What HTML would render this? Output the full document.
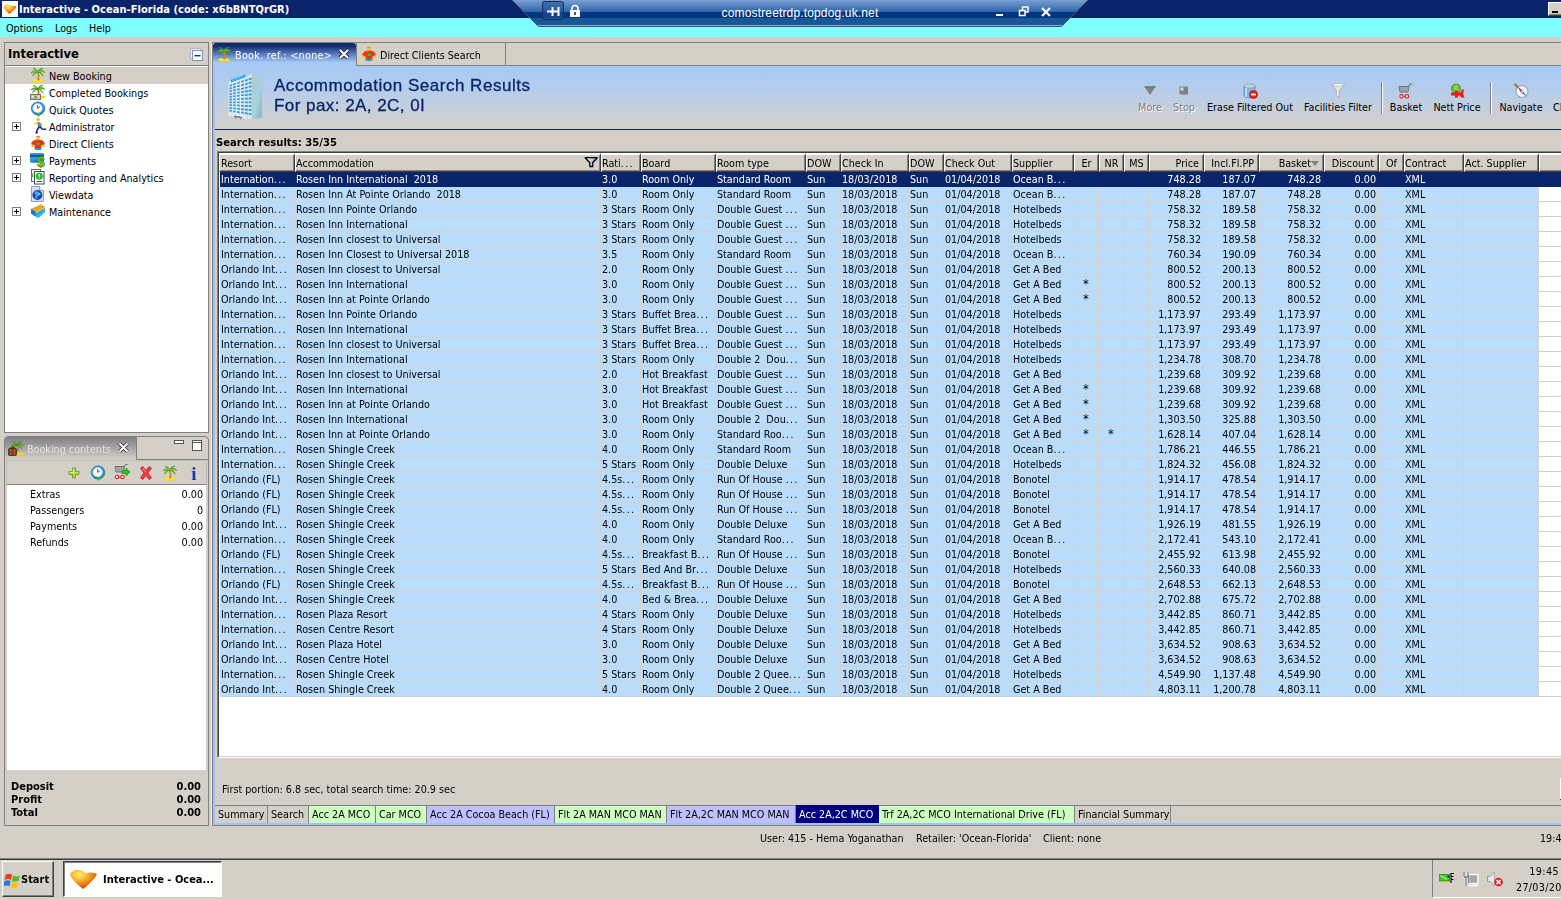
<!DOCTYPE html>
<html lang="en">
<head>
<meta charset="utf-8">
<title>Interactive - Ocean-Florida</title>
<style>
*{box-sizing:border-box}
html,body{margin:0;padding:0}
body{width:1561px;height:899px;overflow:hidden;position:relative;opacity:.999;background:#D4D0C8;font-family:"DejaVu Sans Condensed","Liberation Sans",sans-serif;font-size:10.7px;color:#000;line-height:13px}
.a{position:absolute;white-space:nowrap}
/* title bar */
#title{left:0;top:0;width:1561px;height:18px;background:#0A246A}
#title .t{left:19px;top:3px;letter-spacing:.05px;color:#fff;font-weight:bold;font-size:11px;line-height:14px}
#minb{left:1548px;top:2px;width:16px;height:14px;background:#D4D0C8;border-top:1px solid #fff;border-left:1px solid #fff;border-bottom:1px solid #404040;box-shadow:inset 0 -1px 0 #808080}
#minb i{position:absolute;left:3px;top:8px;width:6px;height:2px;background:#000}
#menu{left:0;top:18px;width:1561px;height:19px;background:#80FFFF}
#menu span{position:absolute;top:4px}
/* left top panel */
#lp{left:4px;top:42px;width:205px;height:391px;border:1px solid #808080;background:#D4D0C8}
#lp .hd{left:0;top:0;width:203px;height:23px;border-bottom:1px solid #808080}
#lp .hd .t{left:3px;top:3px;font-weight:bold;font-size:12.8px;line-height:16px}
#lp .tree{left:0;top:23px;width:203px;height:366px;background:#fff;border-top:1px solid #fff}
#lp .sel{left:0;top:0;width:203px;height:17px;background:#D4D0C8}
.ti{position:absolute;left:44px;height:17px;line-height:17px;padding-top:1px;white-space:nowrap}
.pm{position:absolute;left:7px;width:9px;height:9px;border:1px solid #808080;background:#fff}
.pm:before{content:"";position:absolute;left:1px;top:3px;width:5px;height:1px;background:#000}
.pm:after{content:"";position:absolute;left:3px;top:1px;width:1px;height:5px;background:#000}
.ic{position:absolute;width:16px;height:16px}
/* left bottom panel */
#bp{left:4px;top:436px;width:205px;height:390px;border:1px solid #808080;border-radius:4px 4px 0 0;background:#D4D0C8}
#bp .tab{left:0;top:0;width:131px;height:23px;border-radius:3px 0 0 0;background:linear-gradient(#7f7f80,#a5a3a3 45%,#d4d0c8)}
#bp .tab .t{left:22px;top:6px;color:#e6e3dd}
#bp .tabr{left:131px;top:0;width:72px;height:23px;border-left:1px solid #808080;border-bottom:1px solid #808080}
#bp .tb{left:1px;top:23px;width:201px;height:25px;border:1px solid #c0bdb6;border-bottom:1px solid #808080}
#bp .list{left:2px;top:48px;width:199px;height:285px;background:#fff}
#bp .list span{position:absolute}
#bp .tot{font-weight:bold;font-size:11px}
/* main */
#edge{left:211px;top:42px;width:2px;height:784px;background:#808080;border-left:1px solid #eceae6}
#mtabs{left:212px;top:42px;width:1349px;height:24px;border-top:1px solid #808080;border-bottom:1px solid #808080}
#tab1{left:213px;top:43px;width:143px;height:23px;border-radius:3px 3px 0 0;background:linear-gradient(#0A246A 0,#15307a 15%,#5d7fc0 50%,#a6caf7 85%,#a7c9f7)}
#tab1 .t{left:22px;top:6px;color:#fff;letter-spacing:.3px}
#tab2{left:356px;top:43px;width:150px;height:22px;border-right:1px solid #808080;border-left:1px solid #808080}
#tab2 .t{left:23px;top:6px}
#lb{left:213px;top:66px;width:2px;height:758px;background:#9cc3f8}
#bb{left:213px;top:823px;width:1348px;height:2px;background:#9cc3f8}
#bb2{left:212px;top:825px;width:1349px;height:1px;background:#808080}
#hdr{left:215px;top:66px;width:1346px;height:63px;background:linear-gradient(#a6caf4 0,#b4cdec 35%,#c4cfde 65%,#d4d0c8 100%)}
#hline{left:215px;top:129px;width:1346px;height:1px;background:#0A246A}
#hdr .h1{left:59px;top:10px;font-family:"Liberation Sans",sans-serif;font-size:17px;line-height:20px;color:#0A246A;letter-spacing:.52px;-webkit-text-stroke:.3px #0A246A}
#hdr .h2{left:59px;top:30px;font-family:"Liberation Sans",sans-serif;font-size:17px;line-height:20px;color:#0A246A;letter-spacing:.45px;-webkit-text-stroke:.3px #0A246A}
.tbi{position:absolute;top:35px;height:13px;white-space:nowrap;text-align:center}
.tsep{position:absolute;top:16px;width:2px;height:32px;border-left:1px solid #808080;border-right:1px solid #fff}
#sr{left:216px;top:136px;font-weight:bold;font-size:11.2px;line-height:14px}
/* grid */
#gridb{left:217px;top:151px;width:1344px;height:607px;border-top:1px solid #808080;border-left:1px solid #808080;border-bottom:1px solid #fff;background:#fff}
#gridb2{left:218px;top:152px;width:1343px;height:605px;border-top:1px solid #404040;border-left:1px solid #404040;border-bottom:1px solid #D4D0C8}
#grid{left:219px;top:153px;width:1342px;height:603px;overflow:hidden}
.hc{position:absolute;top:0;height:19px;background:#D4D0C8;border-top:2px solid #fff;border-left:1px solid #fff;border-right:1px solid #404040;border-bottom:1px solid #404040;box-shadow:inset -1px -1px 0 #808080;padding:2px 3px 0 0;line-height:13px;white-space:nowrap;overflow:hidden}
.hc:first-child{padding-left:1px}
.hc.ar{text-align:right;padding-right:4px}
.hc.ac{text-align:center;padding:2px 0 0 0}
.fil{position:absolute;right:2px;top:2px}
.sa{display:inline-block;width:0;height:0;border-left:4px solid transparent;border-right:4px solid transparent;border-top:5px solid #808080;margin-left:0;vertical-align:1px}
.r{position:absolute;left:1px;width:1341px;height:15px;background:linear-gradient(to right,#BADDFD 0,#BADDFD 1319px,#fff 1319px);border-bottom:1px solid #D5D1CB}
.r b{position:absolute;top:0;height:14px;font-weight:normal;line-height:16px;padding:0 3px 0 1px;white-space:nowrap;overflow:hidden;border-right:0;box-shadow:1px 0 0 #D5D1CB}
.r b.ar{text-align:right;padding-right:2px}
.r b.ac{text-align:center;padding:0}
.r b.st{font-size:13px;line-height:14px}
.r.sel{width:1341px;background:#0A246A;color:#fff;border-bottom-color:#0A246A}
.r.sel b{box-shadow:none}
s{text-decoration:none;letter-spacing:1.3px}
#fp{left:222px;top:783px}
/* bottom tabs */
.bt{position:absolute;top:805px;height:18px;border-top:1px solid #808080;border-right:1px solid #808080;padding:2px 0 0 3px;white-space:nowrap;overflow:hidden}
#status{left:760px;top:832px}
#clk{left:1540px;top:832px}
/* taskbar */
#tbar{left:0;top:858px;width:1561px;height:41px;background:#D4D0C8;border-top:1px solid #808080;box-shadow:inset 0 1px 0 #404040}
#start{left:2px;top:861px;width:52px;height:36px;background:#D4D0C8;border-top:1px solid #fff;border-left:1px solid #fff;border-right:1px solid #404040;border-bottom:1px solid #404040;box-shadow:inset -1px -1px 0 #808080}
#start .t{left:18px;top:11px;font-weight:bold;font-size:11px}
#task{left:63px;top:861px;width:159px;height:36px;background:#fdfdfc;border-top:1px solid #404040;border-left:1px solid #404040;border-right:1px solid #fff;border-bottom:1px solid #fff;box-shadow:inset 1px 1px 0 #808080}
#task .t{left:39px;top:11px;font-weight:bold;font-size:11px}
#tray{left:1432px;top:860px;width:135px;height:38px;border-left:1px solid #808080;border-bottom:1px solid #fff}
</style>
</head>
<body>
<!-- title bar -->
<div id="title" class="a">
  <svg class="a" style="left:2px;top:1px" width="16" height="16" viewBox="0 0 16 16"><defs><radialGradient id="ig" cx=".35" cy=".25" r=".8"><stop offset="0" stop-color="#fff070"/><stop offset=".4" stop-color="#f8b028"/><stop offset=".8" stop-color="#d86010"/><stop offset="1" stop-color="#a83c0c"/></radialGradient></defs><rect x="0" y="0" width="16" height="16" fill="#fff"/><path d="M1.500 6.500C2 4.500 3.500 3.200 5.500 3.400c1.500.100 2.500.800 3.500 1.600 1.500-.600 3.500-.300 5.500.600-.800 2-2.500 3.600-4 5-1 .900-2 1.800-3 2.500-1.200-1-2.500-2-4-3.500C2.500 8.600 1.800 7.600 1.500 6.500Z" fill="url(#ig)"/></svg>
  <span class="a t">Interactive - Ocean-Florida (code: x6bBNTQrGR)</span>
  <div id="minb" class="a"><i></i></div>
</div>
<div id="menu" class="a"><span style="left:6px">Options</span><span style="left:55px">Logs</span><span style="left:89px">Help</span></div>
<!-- rdp bar -->
<svg class="a" style="left:510px;top:0" width="582" height="28" viewBox="0 0 582 28">
 <defs><linearGradient id="rg" x1="0" y1="0" x2="0" y2="1"><stop offset="0" stop-color="#7a9fd3"/><stop offset=".45" stop-color="#2f65a9"/><stop offset=".46" stop-color="#06357f"/><stop offset=".68" stop-color="#06357f"/><stop offset=".69" stop-color="#195896"/><stop offset="1" stop-color="#195896"/></linearGradient></defs>
 <path d="M2 0 H578 L552 26 H28 Z" fill="url(#rg)"/>
 <path d="M27 25.500 H553" stroke="#86a8d4" stroke-width="1"/>
 <path d="M2 0 L28.500 26.500 H551.500 L578 0" fill="none" stroke="#48566c" stroke-width="1"/>
 <rect x="32.5" y="1.5" width="21" height="18" rx="2" fill="#1f4f8f" fill-opacity=".55" stroke="#16305c"/>
 <path d="M37 11.5H49M42.5 7V16M48.5 7V16" stroke="#fff" stroke-width="2" fill="none"/>
 <rect x="60" y="10" width="10" height="7" fill="#fff"/><path d="M62 10V8.5a3 3 0 0 1 6 0V10" stroke="#fff" stroke-width="1.6" fill="none"/><rect x="64" y="12" width="2" height="3" fill="#2a5a9a"/>
 <text x="290" y="17" text-anchor="middle" font-family="Liberation Sans, sans-serif" font-size="12" fill="#fff" letter-spacing=".15">comostreetrdp.topdog.uk.net</text>
 <rect x="486" y="14" width="7" height="2" fill="#fff"/>
 <path d="M509.500 10.500h5.500v5h-5.500zM512.500 10V7h5.500v5h-2.500" stroke="#fff" stroke-width="1.500" fill="none"/>
 <path d="M532 8l8 8M540 8l-8 8" stroke="#fff" stroke-width="2.2"/>
</svg>

<!-- left panel top -->
<div id="lp" class="a">
  <div class="hd a"><span class="a t">Interactive</span>
    <svg class="a" style="left:185px;top:5px" width="14" height="14" viewBox="0 0 14 14"><rect x=".5" y=".5" width="10" height="10" fill="#e4f4fc" stroke="#b0b8d0"/><rect x="2.500" y="2.500" width="10" height="10" fill="#f4fcff" stroke="#8890b0"/><rect x="4.500" y="7" width="6" height="1.400" fill="#0c3c7c"/></svg>
  </div>
  <div class="tree a">
    <div class="sel a"></div>
    <span class="ti" style="top:0">New Booking</span>
    <span class="ti" style="top:17px">Completed Bookings</span>
    <span class="ti" style="top:34px">Quick Quotes</span>
    <span class="ti" style="top:51px">Administrator</span>
    <span class="ti" style="top:68px">Direct Clients</span>
    <span class="ti" style="top:85px">Payments</span>
    <span class="ti" style="top:102px">Reporting and Analytics</span>
    <span class="ti" style="top:119px">Viewdata</span>
    <span class="ti" style="top:136px">Maintenance</span>
    <i class="pm" style="top:55px"></i><i class="pm" style="top:89px"></i><i class="pm" style="top:106px"></i><i class="pm" style="top:140px"></i>
    <svg class="a" style="left:25px;top:0px" width="16" height="16" viewBox="0 0 16 16"><ellipse cx="8" cy="14" rx="6.5" ry="1.8" fill="#f6d21c"/><ellipse cx="8" cy="13.5" rx="5" ry="1.1" fill="#fbe65a"/><path d="M8.2 13.5C9.2 10 8.8 7.5 7.6 5" stroke="#b8721c" stroke-width="1.7" fill="none"/><path d="M8.4 12c.5-2 .3-4-.4-6" stroke="#e8a030" stroke-width=".7" fill="none"/><path d="M7.8 5C6 3.2 3 3.4 1 6 3 4.8 5.5 5 7.8 5ZM7.8 5C9 2.8 12.5 2.5 15 5.5 12.6 4.5 10 4.8 7.8 5ZM7.8 5C5.5 4.8 3.3 6 2.6 9 4 6.8 6 6 7.8 5ZM7.8 5c2.4 0 4.6 1.2 5.4 4.2C11.8 7 10 6 7.8 5ZM7.8 5C7 2.8 5 1.2 3 1.6 5 2 6.6 3.4 7.8 5ZM7.8 5C8.6 2.6 11 .8 13 1.4 10.8 1.8 9 3.2 7.8 5Z" fill="#58b418" stroke="#3c9410" stroke-width=".6"/><path d="M7.8 5C6.6 4 4.6 4 3 5M7.8 5c1.4-1 3.6-1 5.2 0" stroke="#9be03c" stroke-width=".6" fill="none"/></svg><svg class="a" style="left:25px;top:17px" width="16" height="16" viewBox="0 0 16 16"><path d="M8.2 11C9 9 8.8 7 7.6 5" stroke="#b8721c" stroke-width="1.7" fill="none"/><path d="M7.8 5C6 3.2 3 3.4 1 6 3 4.8 5.5 5 7.8 5ZM7.8 5C9 2.8 12.5 2.5 15 5.5 12.6 4.5 10 4.8 7.8 5ZM7.8 5C5.5 4.8 3.3 6 2.6 9 4 6.8 6 6 7.8 5ZM7.8 5c2.4 0 4.6 1.2 5.4 4.2C11.8 7 10 6 7.8 5ZM7.8 5C7 2.8 5 1.2 3 1.6 5 2 6.6 3.4 7.8 5ZM7.8 5C8.6 2.6 11 .8 13 1.4 10.8 1.8 9 3.2 7.8 5Z" fill="#58b418" stroke="#3c9410" stroke-width=".6"/><ellipse cx="12.5" cy="13.2" rx="3" ry="1.4" fill="#f6d21c"/><rect x=".5" y="10.5" width="10" height="5" fill="#c8ccb0" stroke="#70745c"/><circle cx="5.5" cy="13" r="1.5" fill="#8a9070"/><rect x="2" y="12" width="1.5" height="1" fill="#fff"/><rect x="7.8" y="12" width="1.5" height="1" fill="#fff"/></svg><svg class="a" style="left:25px;top:34px" width="16" height="16" viewBox="0 0 16 16"><circle cx="8" cy="7.5" r="6.6" fill="#2a90f0"/><circle cx="8" cy="7.5" r="6.6" fill="none" stroke="#1468d0" stroke-width=".8"/><circle cx="7.6" cy="7.2" r="4.7" fill="#fff"/><circle cx="7.6" cy="7.2" r="4.7" fill="none" stroke="#c8d0d8" stroke-width=".8"/><path d="M7.6 4v3.4l2.4-1.6" stroke="#444" stroke-width=".9" fill="none"/><path d="M5.5 11.5 8.5 15.5 15 8.5C14.5 11 12 13 9 13.2Z" fill="#4cc030" stroke="#2c9a18" stroke-width=".5"/></svg><svg class="a" style="left:26px;top:51px" width="16" height="16" viewBox="0 0 16 16"><circle cx="7.2" cy="1.8" r="1.5" fill="#f4c020"/><path d="M5.5 1.2h3" stroke="#e89010" stroke-width=".8"/><path d="M6.2 3.8 9.4 4.6 10.6 8.4 7 9Z" fill="#6c84c8"/><path d="M7.6 4.2 9.8 5 10.4 7.8 8.6 8Z" fill="#58a838"/><path d="M6.4 4.6 3.2 6.4M9.6 5.4l2 2.6" stroke="#f4c020" stroke-width="1.1" fill="none"/><path d="M8.6 8.6 6.6 11 5.4 14.6M8.8 8.6l2.6 2.4 3.8.4" stroke="#1c2c9c" stroke-width="1.7" fill="none" stroke-linejoin="round"/><path d="M4.6 14.8h2.2" stroke="#101860" stroke-width="1.4"/></svg><svg class="a" style="left:25px;top:68px" width="16" height="16" viewBox="0 0 16 16"><ellipse cx="8" cy="2.4" rx="1.8" ry="2" fill="#f8c828"/><path d="M6 1.6h4" stroke="#e89010" stroke-width="1"/><path d="M1.2 8.6C2 5.8 4.6 4.4 8 4.4s6 1.4 6.8 4.2L13 11l-1.6-1.2V14H4.6V9.8L3 11Z" fill="#f03010"/><path d="M2 7.4C3 5.6 5 4.8 8 4.8" stroke="#ff8040" stroke-width=".8" fill="none"/><circle cx="2.4" cy="10.8" r="1.4" fill="#f8c828"/><circle cx="13.6" cy="10.8" r="1.4" fill="#f8c828"/><rect x="6.6" y="7.4" width="3.2" height="2.6" fill="#28c040"/><rect x="4.8" y="13" width="6.4" height="2" fill="#30a8c8"/><path d="M8 13v2" stroke="#086080" stroke-width=".6"/></svg><svg class="a" style="left:25px;top:85px" width="16" height="16" viewBox="0 0 16 16"><rect x="0" y="1" width="14" height="9.4" rx="1" fill="#3c94e4"/><rect x="0" y="2.8" width="14" height="2" fill="#124c9c"/><path d="M0 10.4 14 4v6.4z" fill="#2478d0"/><text x="11" y="14.6" text-anchor="middle" font-family="Liberation Sans,sans-serif" font-weight="bold" font-size="14" fill="#78c818" stroke="#3c8c08" stroke-width=".5">$</text></svg><svg class="a" style="left:25px;top:102px" width="16" height="16" viewBox="0 0 16 16"><rect x="1.5" y=".5" width="9" height="12" fill="#fff" stroke="#5c6c7c"/><rect x="4.5" y="2.5" width="9.5" height="12.5" fill="#fff" stroke="#3c4c5c"/><circle cx="9.3" cy="7.2" r="3.3" fill="#30c828"/><circle cx="9.3" cy="7.2" r="3.3" fill="none" stroke="#189010" stroke-width=".6"/><path d="M9.3 5v2.6" stroke="#fff" stroke-width="1.2"/><circle cx="9.3" cy="9" r=".6" fill="#fff"/><path d="M6.5 12.5h5.6" stroke="#6c4c3c" stroke-width="1"/><path d="M2.5 4.5v4" stroke="#30c828" stroke-width="1.4"/></svg><svg class="a" style="left:25px;top:119px" width="16" height="16" viewBox="0 0 16 16"><path d="M1.5.5h8l4 4v11h-12z" fill="#d4e0f4" stroke="#8ca0c4"/><path d="M9.5.5v4h4" fill="#f4f8ff" stroke="#8ca0c4"/><circle cx="7.4" cy="9" r="4.6" fill="#2838c8"/><path d="M5 6.4c1.6-.8 3-.2 3.4 1 .4 1.4-.6 2-1.6 2.4s-1 1.8-.2 2.800" fill="none" stroke="#30d0d8" stroke-width="1.6"/><circle cx="9.4" cy="8" r="1.3" fill="#58e0a0"/><circle cx="5.8" cy="7.4" r="1.2" fill="#50b8f0"/><circle cx="7.4" cy="9" r="4.6" fill="none" stroke="#181888" stroke-width=".6"/></svg><svg class="a" style="left:25px;top:136px" width="16" height="16" viewBox="0 0 16 16"><path d="M1 6 11 1.6 15 4 15 9 8.4 15 1 10.6Z" fill="#1c9ce4"/><path d="M1 6 11 1.6 15 4 5.6 8.800Z" fill="#f8c020"/><path d="M2.4 6.4 11.6 2.6M3.6 7.2 12.8 3.2M4.800 7.900 14 3.800" stroke="#f08808" stroke-width=".7"/><path d="M1 6l4.600 2.800v4.600L1 10.600z" fill="#1478c8"/><path d="M5.600 8.800 15 4v2L5.600 11z" fill="#fce060"/><path d="M5.600 11 15 6.200V9L8.400 15l-2.800-1.600z" fill="#30c0f0"/><path d="M5.600 10.200 15 5.400M5.600 12.400 13 8.400" stroke="#0c68b0" stroke-width=".6"/></svg>
  </div>
</div>

<!-- left panel bottom -->
<div id="bp" class="a">
  <div class="tab a"><svg class="a" style="left:3px;top:3px" width="16" height="16" viewBox="0 0 16 16"><path d="M9.500 11C10.300 9 10 7 9 5" stroke="#b8721c" stroke-width="1.500" fill="none"/><path d="M9 5C7.500 3.200 5 3.400 3 5.500 5 4.800 7 5 9 5ZM9 5C10 2.800 13 2.500 15.500 5.500 13.200 4.500 11 4.800 9 5ZM9 5C7 4.800 5.300 6 4.600 8.500 6 6.800 7.500 6 9 5ZM9 5c2.200 0 4.200 1.200 5 4.200C12.800 7 11 6 9 5ZM9 5C8.200 2.800 6.500 1.200 4.500 1.600 6.500 2 7.800 3.400 9 5ZM9 5C9.800 2.600 12 .800 14 1.400 11.800 1.800 10.200 3.200 9 5Z" fill="#58b418" stroke="#3c9410" stroke-width=".6"/><ellipse cx="12" cy="14" rx="4" ry="1.600" fill="#f6d21c"/><rect x=".500" y="8.500" width="8" height="7" rx="1" fill="#7c4420" stroke="#48240c" stroke-width=".8"/><path d="M3 8.500V7h3v1.500" fill="none" stroke="#48240c" stroke-width="1"/><path d="M2.500 9v6M6.500 9v6" stroke="#a86838" stroke-width=".8"/></svg><span class="a t">Booking contents</span>
    <svg class="a" style="left:113px;top:5px" width="11" height="11" viewBox="0 0 11 11"><path d="M1.5 1.5l8 8M9.5 1.5l-8 8" stroke="#333" stroke-width="3.6"/><path d="M1.5 1.5l8 8M9.5 1.5l-8 8" stroke="#fff" stroke-width="1.8"/></svg>
  </div>
  <div class="tabr a">
    <svg class="a" style="left:37px;top:3px" width="30" height="12" viewBox="0 0 30 12"><rect x=".5" y=".5" width="9" height="3" fill="#fff" stroke="#555"/><rect x="18.5" y=".5" width="9" height="10" fill="#fff" stroke="#555"/><rect x="18" y="0" width="10" height="3" fill="#555"/><rect x="19" y="1" width="8" height="1" fill="#fff"/></svg>
  </div>
  <div class="tb a"><svg class="a" style="left:59px;top:4px" width="16" height="16" viewBox="0 0 16 16"><path d="M6.500 3h3v3.500H13v3H9.500V13h-3V9.500H3v-3h3.500z" fill="#b4dc50" stroke="#6ca428" stroke-width="1"/><path d="M7.400 4v3.400H4" stroke="#e0f4a0" stroke-width=".9" fill="none"/></svg><svg class="a" style="left:83px;top:4px" width="16" height="16" viewBox="0 0 16 16"><circle cx="8" cy="7.5" r="6.6" fill="#2a90f0"/><circle cx="8" cy="7.5" r="6.6" fill="none" stroke="#1468d0" stroke-width=".8"/><circle cx="7.6" cy="7.2" r="4.7" fill="#fff"/><circle cx="7.6" cy="7.2" r="4.7" fill="none" stroke="#c8d0d8" stroke-width=".8"/><path d="M7.6 4v3.4l2.4-1.6" stroke="#444" stroke-width=".9" fill="none"/><path d="M5.5 11.5 8.5 15.5 15 8.5C14.5 11 12 13 9 13.2Z" fill="#4cc030" stroke="#2c9a18" stroke-width=".5"/></svg><svg class="a" style="left:107px;top:3px" width="17" height="17" viewBox="0 0 17 17"><path d="M1 2.500h9.500l-1 5.500h-7.500zM10.500 2.500l.8-2h2.200" fill="none" stroke="#707070" stroke-width="1"/><path d="M3 2.500v5.500M5 2.500v5.500M7 2.500v5.500M9 2.500v5.500" stroke="#707070" stroke-width=".9"/><circle cx="3" cy="13" r="1.700" fill="#fff" stroke="#e01818" stroke-width="1.100"/><circle cx="8.500" cy="13" r="1.700" fill="#fff" stroke="#e01818" stroke-width="1.100"/><path d="M4.700 13h2.100" stroke="#e01818" stroke-width=".9"/><path d="M8 6.500h4v-2.500l4 4-4 4v-2.500h-4z" fill="#28c028" stroke="#108810" stroke-width=".6"/></svg><svg class="a" style="left:131px;top:4px" width="16" height="16" viewBox="0 0 16 16"><path d="M2.500 3.200 4.800 1.500 8 5.600 11.200 1.500 13.500 3.200 10 8 13.500 12.800 11.200 14.500 8 10.400 4.800 14.500 2.500 12.800 6 8z" fill="#f03c48" stroke="#c01828" stroke-width=".8"/><path d="M4.600 3 8 7.200" stroke="#ff98a0" stroke-width=".9"/></svg><svg class="a" style="left:155px;top:4px" width="16" height="16" viewBox="0 0 16 16"><ellipse cx="8" cy="14" rx="6.5" ry="1.8" fill="#f6d21c"/><ellipse cx="8" cy="13.5" rx="5" ry="1.1" fill="#fbe65a"/><path d="M8.2 13.5C9.2 10 8.8 7.5 7.6 5" stroke="#b8721c" stroke-width="1.7" fill="none"/><path d="M8.4 12c.5-2 .3-4-.4-6" stroke="#e8a030" stroke-width=".7" fill="none"/><path d="M7.8 5C6 3.2 3 3.4 1 6 3 4.8 5.5 5 7.8 5ZM7.8 5C9 2.8 12.5 2.5 15 5.5 12.6 4.5 10 4.8 7.8 5ZM7.8 5C5.5 4.8 3.3 6 2.6 9 4 6.8 6 6 7.8 5ZM7.8 5c2.4 0 4.6 1.2 5.4 4.2C11.8 7 10 6 7.8 5ZM7.8 5C7 2.8 5 1.2 3 1.6 5 2 6.6 3.4 7.8 5ZM7.8 5C8.6 2.6 11 .8 13 1.4 10.8 1.8 9 3.2 7.8 5Z" fill="#58b418" stroke="#3c9410" stroke-width=".6"/><path d="M7.8 5C6.6 4 4.6 4 3 5M7.8 5c1.4-1 3.6-1 5.2 0" stroke="#9be03c" stroke-width=".6" fill="none"/></svg><svg class="a" style="left:179px;top:4px" width="16" height="16" viewBox="0 0 16 16"><text x="8" y="14.500" text-anchor="middle" font-family="Liberation Serif,serif" font-weight="bold" font-size="19" fill="#1838b0">i</text></svg></div>
  <div class="list a">
    <span style="left:23px;top:3px">Extras</span><span style="right:3px;top:3px">0.00</span>
    <span style="left:23px;top:19px">Passengers</span><span style="right:3px;top:19px">0</span>
    <span style="left:23px;top:35px">Payments</span><span style="right:3px;top:35px">0.00</span>
    <span style="left:23px;top:51px">Refunds</span><span style="right:3px;top:51px">0.00</span>
  </div>
  <span class="a tot" style="left:6px;top:343px">Deposit</span><span class="a tot" style="right:7px;top:343px">0.00</span>
  <span class="a tot" style="left:6px;top:356px">Profit</span><span class="a tot" style="right:7px;top:356px">0.00</span>
  <span class="a tot" style="left:6px;top:369px">Total</span><span class="a tot" style="right:7px;top:369px">0.00</span>
</div>

<!-- main area -->
<div id="edge" class="a"></div>
<div id="mtabs" class="a"></div>
<div id="tab1" class="a"><svg class="a" style="left:3px;top:3px" width="16" height="16" viewBox="0 0 16 16"><ellipse cx="8" cy="14" rx="6.5" ry="1.8" fill="#f6d21c"/><ellipse cx="8" cy="13.5" rx="5" ry="1.1" fill="#fbe65a"/><path d="M8.2 13.5C9.2 10 8.8 7.5 7.6 5" stroke="#b8721c" stroke-width="1.7" fill="none"/><path d="M8.4 12c.5-2 .3-4-.4-6" stroke="#e8a030" stroke-width=".7" fill="none"/><path d="M7.8 5C6 3.2 3 3.4 1 6 3 4.8 5.5 5 7.8 5ZM7.8 5C9 2.8 12.5 2.5 15 5.5 12.6 4.5 10 4.8 7.8 5ZM7.8 5C5.5 4.8 3.3 6 2.6 9 4 6.8 6 6 7.8 5ZM7.8 5c2.4 0 4.6 1.2 5.4 4.2C11.8 7 10 6 7.8 5ZM7.8 5C7 2.8 5 1.2 3 1.6 5 2 6.6 3.4 7.8 5ZM7.8 5C8.6 2.6 11 .8 13 1.4 10.8 1.8 9 3.2 7.8 5Z" fill="#58b418" stroke="#3c9410" stroke-width=".6"/><path d="M7.8 5C6.6 4 4.6 4 3 5M7.8 5c1.4-1 3.6-1 5.2 0" stroke="#9be03c" stroke-width=".6" fill="none"/></svg><span class="a t">Book. ref.: &lt;none&gt;</span>
  <svg class="a" style="left:125px;top:5px" width="12" height="12" viewBox="0 0 12 12"><path d="M2 2l8 8M10 2l-8 8" stroke="#2a2a40" stroke-width="4"/><path d="M2 2l8 8M10 2l-8 8" stroke="#fff" stroke-width="2"/></svg>
</div>
<div id="tab2" class="a"><svg class="a" style="left:4px;top:3px" width="16" height="16" viewBox="0 0 16 16"><ellipse cx="8" cy="2.4" rx="1.8" ry="2" fill="#f8c828"/><path d="M6 1.6h4" stroke="#e89010" stroke-width="1"/><path d="M1.2 8.6C2 5.8 4.6 4.4 8 4.4s6 1.4 6.8 4.2L13 11l-1.6-1.2V14H4.6V9.8L3 11Z" fill="#f03010"/><path d="M2 7.4C3 5.6 5 4.8 8 4.8" stroke="#ff8040" stroke-width=".8" fill="none"/><circle cx="2.4" cy="10.8" r="1.4" fill="#f8c828"/><circle cx="13.6" cy="10.8" r="1.4" fill="#f8c828"/><rect x="6.6" y="7.4" width="3.2" height="2.6" fill="#28c040"/><rect x="4.8" y="13" width="6.4" height="2" fill="#30a8c8"/><path d="M8 13v2" stroke="#086080" stroke-width=".6"/></svg><span class="a t">Direct Clients Search</span></div>
<div id="hdr" class="a">
  <svg class="a" style="left:13px;top:8px" width="35" height="48" viewBox="0 0 35 48"><defs><linearGradient id="bg1" x1="0" x2="1"><stop offset="0" stop-color="#dfe8ea"/><stop offset=".5" stop-color="#f2f6f6"/><stop offset="1" stop-color="#d4dfe2"/></linearGradient><linearGradient id="bg2" x1="0" x2="1" y1="0" y2="1"><stop offset="0" stop-color="#b4c8cc"/><stop offset=".55" stop-color="#a4d4dc"/><stop offset="1" stop-color="#8cb0b8"/></linearGradient></defs><path d="M0 8 24 0V45.600L0 41.700Z" fill="url(#bg1)"/><path d="M24 0 34 4.300V43.700L24 45.600Z" fill="url(#bg2)"/><path d="M0 8v33.700M3.900 6.700v35.600M7.700 5.400v37.500M11.600 4.100v39.500M15.400 2.900v41.300M19.300 1.600v43.200" stroke="#c0ccd0" stroke-width=".7"/><path d="M2.800 8.500 17.500 3.200V.600L2.800 5.700Z" fill="#20a8f0"/><path d="M5 6.600v-1M8 5.500v-1M11 4.400v-1M14 3.300v-1" stroke="#b8e4fc" stroke-width="1"/><path d="M1.4 10.9l2.3 -0.7v1.800l-2.3 0.6zM1.4 13.7l2.3 -0.6v1.800l-2.3 0.5zM1.4 16.4l2.3 -0.5v1.800l-2.3 0.4zM1.4 19.2l2.3 -0.3v1.800l-2.3 0.3zM1.4 22.0l2.3 -0.2v1.800l-2.3 0.2zM1.4 24.7l2.3 -0.1v1.800l-2.3 0.1zM1.4 27.5l2.3 0.0v1.800l-2.3 -0.0zM1.4 30.2l2.3 0.1v1.800l-2.3 -0.2zM1.4 33.0l2.3 0.2v1.800l-2.3 -0.3zM1.4 35.7l2.3 0.3v1.800l-2.3 -0.4zM5.2 9.7l2.4 -0.7v1.800l-2.4 0.7zM5.2 12.6l2.4 -0.6v1.800l-2.4 0.6zM5.2 15.6l2.4 -0.5v1.800l-2.4 0.4zM5.2 18.6l2.4 -0.4v1.800l-2.4 0.3zM5.2 21.5l2.4 -0.2v1.800l-2.4 0.2zM5.2 24.5l2.4 -0.1v1.800l-2.4 0.1zM5.2 27.5l2.4 0.0v1.800l-2.4 -0.0zM5.2 30.4l2.4 0.1v1.800l-2.4 -0.2zM5.2 33.4l2.4 0.2v1.800l-2.4 -0.3zM5.2 36.4l2.4 0.4v1.800l-2.4 -0.4zM9.1 8.4l2.5 -0.8v1.800l-2.5 0.7zM9.1 11.5l2.5 -0.6v1.800l-2.5 0.6zM9.1 14.7l2.5 -0.5v1.800l-2.5 0.5zM9.1 17.9l2.5 -0.4v1.800l-2.5 0.3zM9.1 21.1l2.5 -0.3v1.800l-2.5 0.2zM9.1 24.3l2.5 -0.1v1.800l-2.5 0.1zM9.1 27.4l2.5 0.0v1.800l-2.5 -0.1zM9.1 30.6l2.5 0.1v1.800l-2.5 -0.2zM9.1 33.8l2.5 0.3v1.800l-2.5 -0.3zM9.1 37.0l2.5 0.4v1.800l-2.5 -0.4zM13.0 7.1l2.7 -0.8v1.800l-2.7 0.7zM13.0 10.5l2.7 -0.7v1.800l-2.7 0.6zM13.0 13.9l2.7 -0.5v1.800l-2.7 0.5zM13.0 17.3l2.7 -0.4v1.800l-2.7 0.3zM13.0 20.6l2.7 -0.3v1.800l-2.7 0.2zM13.0 24.0l2.7 -0.1v1.800l-2.7 0.1zM13.0 27.4l2.7 0.0v1.800l-2.7 -0.1zM13.0 30.8l2.7 0.1v1.800l-2.7 -0.2zM13.0 34.2l2.7 0.3v1.800l-2.7 -0.3zM13.0 37.6l2.7 0.4v1.800l-2.7 -0.5zM16.8 5.8l2.8 -0.8v1.800l-2.8 0.8zM16.8 9.4l2.8 -0.7v1.800l-2.8 0.6zM16.8 13.0l2.8 -0.6v1.800l-2.8 0.5zM16.8 16.6l2.8 -0.4v1.800l-2.8 0.4zM16.8 20.2l2.8 -0.3v1.800l-2.8 0.2zM16.8 23.8l2.8 -0.1v1.800l-2.8 0.1zM16.8 27.4l2.8 0.0v1.800l-2.8 -0.1zM16.8 31.0l2.8 0.1v1.800l-2.8 -0.2zM16.8 34.6l2.8 0.3v1.800l-2.8 -0.3zM16.8 38.2l2.8 0.4v1.800l-2.8 -0.5zM20.6 4.5l2.9 -0.9v1.800l-2.9 0.8zM20.6 8.3l2.9 -0.7v1.800l-2.9 0.7zM20.6 12.1l2.9 -0.6v1.800l-2.9 0.5zM20.6 16.0l2.9 -0.4v1.800l-2.9 0.4zM20.6 19.8l2.9 -0.3v1.800l-2.9 0.2zM20.6 23.6l2.9 -0.1v1.800l-2.9 0.1zM20.6 27.4l2.9 0.0v1.800l-2.9 -0.1zM20.6 31.2l2.9 0.1v1.800l-2.9 -0.2zM20.6 35.0l2.9 0.3v1.800l-2.9 -0.3zM20.6 38.9l2.9 0.4v1.800l-2.9 -0.5z" fill="#1c98e8"/><path d="M6 41.500l8 1.300v1.800l-8-1.300z" fill="#787f86"/><path d="M7.500 43.300v1.800M12.500 44.100v1.800" stroke="#8c959c" stroke-width=".8"/></svg>
  <span class="a h1">Accommodation Search Results</span>
  <span class="a h2">For pax: 2A, 2C, 0I</span>
  <svg class="a" style="left:927px;top:17px" width="16" height="16" viewBox="0 0 16 16"><path d="M2.500 3.500h11l-5.500 8.500z" fill="#808080"/><path d="M2.500 4h11" stroke="#686868" stroke-width="1"/></svg><span class="tbi" style="left:875px;width:120px;color:#808080;text-shadow:1px 1px 0 #fff">More</span><svg class="a" style="left:961px;top:17px" width="16" height="16" viewBox="0 0 16 16"><rect x="3.500" y="3.500" width="8.500" height="8" fill="#808080"/><rect x="4.500" y="4.500" width="3" height="3" fill="#d8d8d8"/></svg><span class="tbi" style="left:909px;width:120px;color:#808080;text-shadow:1px 1px 0 #fff">Stop</span><svg class="a" style="left:1027px;top:17px" width="16" height="16" viewBox="0 0 16 16"><path d="M2 3v9.500c0 1.400 2.500 2.300 5.500 2.300s5.500-.9 5.500-2.300V3z" fill="#7cb8e0"/><path d="M4 5v9" stroke="#b8dcf4" stroke-width="2"/><ellipse cx="7.500" cy="3" rx="5.500" ry="2" fill="#c8d4dc" stroke="#8898a8" stroke-width=".7"/><path d="M2 3v9.500c0 1.400 2.500 2.300 5.500 2.300s5.500-.9 5.500-2.300V3" fill="none" stroke="#4c84b0" stroke-width=".7"/><circle cx="11.500" cy="11.500" r="4" fill="#e82020" stroke="#a00808" stroke-width=".6"/><rect x="9" y="10.600" width="5" height="1.800" fill="#fff"/></svg><span class="tbi" style="left:975px;width:120px;color:#000">Erase Filtered Out</span><svg class="a" style="left:1115px;top:17px" width="16" height="16" viewBox="0 0 16 16"><path d="M1.500 1.500h13l-5.300 6.500v6.500l-2.400-1.500v-5z" fill="#e4e4e4" stroke="#a0a0a0" stroke-width=".8"/><ellipse cx="8" cy="1.800" rx="6.300" ry="1.300" fill="#f8f8f8" stroke="#a8a8a8" stroke-width=".6"/><path d="M7.500 8v5" stroke="#fff" stroke-width="1"/></svg><span class="tbi" style="left:1063px;width:120px;color:#000">Facilities Filter</span><svg class="a" style="left:1183px;top:17px" width="16" height="16" viewBox="0 0 16 16"><path d="M1 3.500h10l-1 5.500h-8zM11 3.500l.8-2.500h2.700" fill="none" stroke="#707070" stroke-width="1"/><path d="M3 3.500v5.500M5 3.500v5.500M7 3.500v5.500M9 3.500v5.500" stroke="#707070" stroke-width=".9"/><circle cx="3.500" cy="13.300" r="1.700" fill="#fff" stroke="#e01818" stroke-width="1.100"/><circle cx="9" cy="13.300" r="1.700" fill="#fff" stroke="#e01818" stroke-width="1.100"/><path d="M5.200 13.300h2.100" stroke="#e01818" stroke-width=".9"/></svg><span class="tbi" style="left:1131px;width:120px;color:#000">Basket</span><svg class="a" style="left:1234px;top:17px" width="16" height="16" viewBox="0 0 16 16"><circle cx="7" cy="5.500" r="4.600" fill="#68b838"/><circle cx="7" cy="5.500" r="4.600" fill="none" stroke="#3c8c18" stroke-width=".7"/><text x="7" y="8.800" text-anchor="middle" font-family="Liberation Sans,sans-serif" font-weight="bold" font-size="9" fill="#a4e060">$</text><path d="M2 9.500h4v-2h3v2h2.500l1.500-3h2l-1 4 1.500 4h-3.500l-1-2h-2v2h-3v-2H2z" fill="#f01818"/></svg><span class="tbi" style="left:1182px;width:120px;color:#000">Nett Price</span><svg class="a" style="left:1298px;top:17px" width="16" height="16" viewBox="0 0 16 16"><circle cx="9" cy="8.500" r="6" fill="#f4f8fc" stroke="#98a8b8" stroke-width="1.200"/><path d="M5 4 10 8 13.500 13.500 8 9.500z" fill="#2870d8"/><path d="M5 4 10 8 8 9.500z" fill="#e02020"/><path d="M1.500 1 5 4.500" stroke="#a86820" stroke-width="1.800"/><circle cx="9" cy="8.700" r=".9" fill="#fff"/></svg><span class="tbi" style="left:1246px;width:120px;color:#000">Navigate</span><i class="tsep" style="left:1166px"></i><i class="tsep" style="left:1275px"></i><span class="tbi" style="left:1338px">Close</span>
</div>
<div id="hline" class="a"></div>
<div id="lb" class="a"></div>
<span id="sr" class="a">Search results: 35/35</span>
<div id="gridb" class="a"></div><div id="gridb2" class="a"></div>
<div id="grid" class="a">
<div class="hc al" style="left:0px;width:76px"><span>Resort</span></div>
<div class="hc al" style="left:76px;width:306px"><span>Accommodation</span><svg class="fil" width="14" height="11" viewBox="0 0 14 11"><defs><linearGradient id="fg" x1="0" x2="1"><stop offset="0" stop-color="#fff"/><stop offset="1" stop-color="#7098d0"/></linearGradient></defs><path d="M1.200.700H13.300L8.700 5.700V9.500H5.800V5.700Z" fill="url(#fg)" stroke="#000" stroke-width="1.300" stroke-linejoin="round"/></svg></div>
<div class="hc al" style="left:382px;width:40px"><span>Rati<s>...</s></span></div>
<div class="hc al" style="left:422px;width:75px"><span>Board</span></div>
<div class="hc al" style="left:497px;width:90px"><span>Room type</span></div>
<div class="hc al" style="left:587px;width:35px"><span>DOW</span></div>
<div class="hc al" style="left:622px;width:68px"><span>Check In</span></div>
<div class="hc al" style="left:690px;width:35px"><span>DOW</span></div>
<div class="hc al" style="left:725px;width:68px"><span>Check Out</span></div>
<div class="hc al" style="left:793px;width:62px"><span>Supplier</span></div>
<div class="hc ac" style="left:855px;width:25px"><span>Er</span></div>
<div class="hc ac" style="left:880px;width:25px"><span>NR</span></div>
<div class="hc ac" style="left:905px;width:25px"><span>MS</span></div>
<div class="hc ar" style="left:930px;width:55px"><span>Price</span></div>
<div class="hc ar" style="left:985px;width:55px"><span>Incl.Fl.PP</span></div>
<div class="hc ar" style="left:1040px;width:65px"><span>Basket</span><i class="sa"></i></div>
<div class="hc ar" style="left:1105px;width:55px"><span>Discount</span></div>
<div class="hc ac" style="left:1160px;width:25px"><span>Of</span></div>
<div class="hc al" style="left:1185px;width:60px"><span>Contract</span></div>
<div class="hc al" style="left:1245px;width:75px"><span>Act. Supplier</span></div>
<div class="hc" style="left:1320px;width:26px"></div>
<div class="r sel" style="top:19px"><b class="al" style="left:0px;width:74px">Internation<s>...</s></b><b class="al" style="left:75px;width:305px">Rosen Inn International&nbsp; 2018</b><b class="al" style="left:381px;width:39px">3.0</b><b class="al" style="left:421px;width:74px">Room Only</b><b class="al" style="left:496px;width:89px">Standard Room</b><b class="al" style="left:586px;width:34px">Sun</b><b class="al" style="left:621px;width:67px">18/03/2018</b><b class="al" style="left:689px;width:34px">Sun</b><b class="al" style="left:724px;width:67px">01/04/2018</b><b class="al" style="left:792px;width:61px">Ocean B<s>...</s></b><b class="ac" style="left:854px;width:24px"></b><b class="ac" style="left:879px;width:24px"></b><b class="ac" style="left:904px;width:24px"></b><b class="ar" style="left:929px;width:54px">748.28</b><b class="ar" style="left:984px;width:54px">187.07</b><b class="ar" style="left:1039px;width:64px">748.28</b><b class="ar" style="left:1104px;width:54px">0.00</b><b class="ac" style="left:1159px;width:24px"></b><b class="al" style="left:1184px;width:59px">XML</b><b class="al" style="left:1244px;width:74px"></b></div>
<div class="r" style="top:34px"><b class="al" style="left:0px;width:74px">Internation<s>...</s></b><b class="al" style="left:75px;width:305px">Rosen Inn At Pointe Orlando&nbsp; 2018</b><b class="al" style="left:381px;width:39px">3.0</b><b class="al" style="left:421px;width:74px">Room Only</b><b class="al" style="left:496px;width:89px">Standard Room</b><b class="al" style="left:586px;width:34px">Sun</b><b class="al" style="left:621px;width:67px">18/03/2018</b><b class="al" style="left:689px;width:34px">Sun</b><b class="al" style="left:724px;width:67px">01/04/2018</b><b class="al" style="left:792px;width:61px">Ocean B<s>...</s></b><b class="ac" style="left:854px;width:24px"></b><b class="ac" style="left:879px;width:24px"></b><b class="ac" style="left:904px;width:24px"></b><b class="ar" style="left:929px;width:54px">748.28</b><b class="ar" style="left:984px;width:54px">187.07</b><b class="ar" style="left:1039px;width:64px">748.28</b><b class="ar" style="left:1104px;width:54px">0.00</b><b class="ac" style="left:1159px;width:24px"></b><b class="al" style="left:1184px;width:59px">XML</b><b class="al" style="left:1244px;width:74px"></b></div>
<div class="r" style="top:49px"><b class="al" style="left:0px;width:74px">Internation<s>...</s></b><b class="al" style="left:75px;width:305px">Rosen Inn Pointe Orlando</b><b class="al" style="left:381px;width:39px">3 Stars</b><b class="al" style="left:421px;width:74px">Room Only</b><b class="al" style="left:496px;width:89px">Double Guest <s>...</s></b><b class="al" style="left:586px;width:34px">Sun</b><b class="al" style="left:621px;width:67px">18/03/2018</b><b class="al" style="left:689px;width:34px">Sun</b><b class="al" style="left:724px;width:67px">01/04/2018</b><b class="al" style="left:792px;width:61px">Hotelbeds</b><b class="ac" style="left:854px;width:24px"></b><b class="ac" style="left:879px;width:24px"></b><b class="ac" style="left:904px;width:24px"></b><b class="ar" style="left:929px;width:54px">758.32</b><b class="ar" style="left:984px;width:54px">189.58</b><b class="ar" style="left:1039px;width:64px">758.32</b><b class="ar" style="left:1104px;width:54px">0.00</b><b class="ac" style="left:1159px;width:24px"></b><b class="al" style="left:1184px;width:59px">XML</b><b class="al" style="left:1244px;width:74px"></b></div>
<div class="r" style="top:64px"><b class="al" style="left:0px;width:74px">Internation<s>...</s></b><b class="al" style="left:75px;width:305px">Rosen Inn International</b><b class="al" style="left:381px;width:39px">3 Stars</b><b class="al" style="left:421px;width:74px">Room Only</b><b class="al" style="left:496px;width:89px">Double Guest <s>...</s></b><b class="al" style="left:586px;width:34px">Sun</b><b class="al" style="left:621px;width:67px">18/03/2018</b><b class="al" style="left:689px;width:34px">Sun</b><b class="al" style="left:724px;width:67px">01/04/2018</b><b class="al" style="left:792px;width:61px">Hotelbeds</b><b class="ac" style="left:854px;width:24px"></b><b class="ac" style="left:879px;width:24px"></b><b class="ac" style="left:904px;width:24px"></b><b class="ar" style="left:929px;width:54px">758.32</b><b class="ar" style="left:984px;width:54px">189.58</b><b class="ar" style="left:1039px;width:64px">758.32</b><b class="ar" style="left:1104px;width:54px">0.00</b><b class="ac" style="left:1159px;width:24px"></b><b class="al" style="left:1184px;width:59px">XML</b><b class="al" style="left:1244px;width:74px"></b></div>
<div class="r" style="top:79px"><b class="al" style="left:0px;width:74px">Internation<s>...</s></b><b class="al" style="left:75px;width:305px">Rosen Inn closest to Universal</b><b class="al" style="left:381px;width:39px">3 Stars</b><b class="al" style="left:421px;width:74px">Room Only</b><b class="al" style="left:496px;width:89px">Double Guest <s>...</s></b><b class="al" style="left:586px;width:34px">Sun</b><b class="al" style="left:621px;width:67px">18/03/2018</b><b class="al" style="left:689px;width:34px">Sun</b><b class="al" style="left:724px;width:67px">01/04/2018</b><b class="al" style="left:792px;width:61px">Hotelbeds</b><b class="ac" style="left:854px;width:24px"></b><b class="ac" style="left:879px;width:24px"></b><b class="ac" style="left:904px;width:24px"></b><b class="ar" style="left:929px;width:54px">758.32</b><b class="ar" style="left:984px;width:54px">189.58</b><b class="ar" style="left:1039px;width:64px">758.32</b><b class="ar" style="left:1104px;width:54px">0.00</b><b class="ac" style="left:1159px;width:24px"></b><b class="al" style="left:1184px;width:59px">XML</b><b class="al" style="left:1244px;width:74px"></b></div>
<div class="r" style="top:94px"><b class="al" style="left:0px;width:74px">Internation<s>...</s></b><b class="al" style="left:75px;width:305px">Rosen Inn Closest to Universal 2018</b><b class="al" style="left:381px;width:39px">3.5</b><b class="al" style="left:421px;width:74px">Room Only</b><b class="al" style="left:496px;width:89px">Standard Room</b><b class="al" style="left:586px;width:34px">Sun</b><b class="al" style="left:621px;width:67px">18/03/2018</b><b class="al" style="left:689px;width:34px">Sun</b><b class="al" style="left:724px;width:67px">01/04/2018</b><b class="al" style="left:792px;width:61px">Ocean B<s>...</s></b><b class="ac" style="left:854px;width:24px"></b><b class="ac" style="left:879px;width:24px"></b><b class="ac" style="left:904px;width:24px"></b><b class="ar" style="left:929px;width:54px">760.34</b><b class="ar" style="left:984px;width:54px">190.09</b><b class="ar" style="left:1039px;width:64px">760.34</b><b class="ar" style="left:1104px;width:54px">0.00</b><b class="ac" style="left:1159px;width:24px"></b><b class="al" style="left:1184px;width:59px">XML</b><b class="al" style="left:1244px;width:74px"></b></div>
<div class="r" style="top:109px"><b class="al" style="left:0px;width:74px">Orlando Int<s>...</s></b><b class="al" style="left:75px;width:305px">Rosen Inn closest to Universal</b><b class="al" style="left:381px;width:39px">2.0</b><b class="al" style="left:421px;width:74px">Room Only</b><b class="al" style="left:496px;width:89px">Double Guest <s>...</s></b><b class="al" style="left:586px;width:34px">Sun</b><b class="al" style="left:621px;width:67px">18/03/2018</b><b class="al" style="left:689px;width:34px">Sun</b><b class="al" style="left:724px;width:67px">01/04/2018</b><b class="al" style="left:792px;width:61px">Get A Bed</b><b class="ac" style="left:854px;width:24px"></b><b class="ac" style="left:879px;width:24px"></b><b class="ac" style="left:904px;width:24px"></b><b class="ar" style="left:929px;width:54px">800.52</b><b class="ar" style="left:984px;width:54px">200.13</b><b class="ar" style="left:1039px;width:64px">800.52</b><b class="ar" style="left:1104px;width:54px">0.00</b><b class="ac" style="left:1159px;width:24px"></b><b class="al" style="left:1184px;width:59px">XML</b><b class="al" style="left:1244px;width:74px"></b></div>
<div class="r" style="top:124px"><b class="al" style="left:0px;width:74px">Orlando Int<s>...</s></b><b class="al" style="left:75px;width:305px">Rosen Inn International</b><b class="al" style="left:381px;width:39px">3.0</b><b class="al" style="left:421px;width:74px">Room Only</b><b class="al" style="left:496px;width:89px">Double Guest <s>...</s></b><b class="al" style="left:586px;width:34px">Sun</b><b class="al" style="left:621px;width:67px">18/03/2018</b><b class="al" style="left:689px;width:34px">Sun</b><b class="al" style="left:724px;width:67px">01/04/2018</b><b class="al" style="left:792px;width:61px">Get A Bed</b><b class="ac st" style="left:854px;width:24px">*</b><b class="ac" style="left:879px;width:24px"></b><b class="ac" style="left:904px;width:24px"></b><b class="ar" style="left:929px;width:54px">800.52</b><b class="ar" style="left:984px;width:54px">200.13</b><b class="ar" style="left:1039px;width:64px">800.52</b><b class="ar" style="left:1104px;width:54px">0.00</b><b class="ac" style="left:1159px;width:24px"></b><b class="al" style="left:1184px;width:59px">XML</b><b class="al" style="left:1244px;width:74px"></b></div>
<div class="r" style="top:139px"><b class="al" style="left:0px;width:74px">Orlando Int<s>...</s></b><b class="al" style="left:75px;width:305px">Rosen Inn at Pointe Orlando</b><b class="al" style="left:381px;width:39px">3.0</b><b class="al" style="left:421px;width:74px">Room Only</b><b class="al" style="left:496px;width:89px">Double Guest <s>...</s></b><b class="al" style="left:586px;width:34px">Sun</b><b class="al" style="left:621px;width:67px">18/03/2018</b><b class="al" style="left:689px;width:34px">Sun</b><b class="al" style="left:724px;width:67px">01/04/2018</b><b class="al" style="left:792px;width:61px">Get A Bed</b><b class="ac st" style="left:854px;width:24px">*</b><b class="ac" style="left:879px;width:24px"></b><b class="ac" style="left:904px;width:24px"></b><b class="ar" style="left:929px;width:54px">800.52</b><b class="ar" style="left:984px;width:54px">200.13</b><b class="ar" style="left:1039px;width:64px">800.52</b><b class="ar" style="left:1104px;width:54px">0.00</b><b class="ac" style="left:1159px;width:24px"></b><b class="al" style="left:1184px;width:59px">XML</b><b class="al" style="left:1244px;width:74px"></b></div>
<div class="r" style="top:154px"><b class="al" style="left:0px;width:74px">Internation<s>...</s></b><b class="al" style="left:75px;width:305px">Rosen Inn Pointe Orlando</b><b class="al" style="left:381px;width:39px">3 Stars</b><b class="al" style="left:421px;width:74px">Buffet Brea<s>...</s></b><b class="al" style="left:496px;width:89px">Double Guest <s>...</s></b><b class="al" style="left:586px;width:34px">Sun</b><b class="al" style="left:621px;width:67px">18/03/2018</b><b class="al" style="left:689px;width:34px">Sun</b><b class="al" style="left:724px;width:67px">01/04/2018</b><b class="al" style="left:792px;width:61px">Hotelbeds</b><b class="ac" style="left:854px;width:24px"></b><b class="ac" style="left:879px;width:24px"></b><b class="ac" style="left:904px;width:24px"></b><b class="ar" style="left:929px;width:54px">1,173.97</b><b class="ar" style="left:984px;width:54px">293.49</b><b class="ar" style="left:1039px;width:64px">1,173.97</b><b class="ar" style="left:1104px;width:54px">0.00</b><b class="ac" style="left:1159px;width:24px"></b><b class="al" style="left:1184px;width:59px">XML</b><b class="al" style="left:1244px;width:74px"></b></div>
<div class="r" style="top:169px"><b class="al" style="left:0px;width:74px">Internation<s>...</s></b><b class="al" style="left:75px;width:305px">Rosen Inn International</b><b class="al" style="left:381px;width:39px">3 Stars</b><b class="al" style="left:421px;width:74px">Buffet Brea<s>...</s></b><b class="al" style="left:496px;width:89px">Double Guest <s>...</s></b><b class="al" style="left:586px;width:34px">Sun</b><b class="al" style="left:621px;width:67px">18/03/2018</b><b class="al" style="left:689px;width:34px">Sun</b><b class="al" style="left:724px;width:67px">01/04/2018</b><b class="al" style="left:792px;width:61px">Hotelbeds</b><b class="ac" style="left:854px;width:24px"></b><b class="ac" style="left:879px;width:24px"></b><b class="ac" style="left:904px;width:24px"></b><b class="ar" style="left:929px;width:54px">1,173.97</b><b class="ar" style="left:984px;width:54px">293.49</b><b class="ar" style="left:1039px;width:64px">1,173.97</b><b class="ar" style="left:1104px;width:54px">0.00</b><b class="ac" style="left:1159px;width:24px"></b><b class="al" style="left:1184px;width:59px">XML</b><b class="al" style="left:1244px;width:74px"></b></div>
<div class="r" style="top:184px"><b class="al" style="left:0px;width:74px">Internation<s>...</s></b><b class="al" style="left:75px;width:305px">Rosen Inn closest to Universal</b><b class="al" style="left:381px;width:39px">3 Stars</b><b class="al" style="left:421px;width:74px">Buffet Brea<s>...</s></b><b class="al" style="left:496px;width:89px">Double Guest <s>...</s></b><b class="al" style="left:586px;width:34px">Sun</b><b class="al" style="left:621px;width:67px">18/03/2018</b><b class="al" style="left:689px;width:34px">Sun</b><b class="al" style="left:724px;width:67px">01/04/2018</b><b class="al" style="left:792px;width:61px">Hotelbeds</b><b class="ac" style="left:854px;width:24px"></b><b class="ac" style="left:879px;width:24px"></b><b class="ac" style="left:904px;width:24px"></b><b class="ar" style="left:929px;width:54px">1,173.97</b><b class="ar" style="left:984px;width:54px">293.49</b><b class="ar" style="left:1039px;width:64px">1,173.97</b><b class="ar" style="left:1104px;width:54px">0.00</b><b class="ac" style="left:1159px;width:24px"></b><b class="al" style="left:1184px;width:59px">XML</b><b class="al" style="left:1244px;width:74px"></b></div>
<div class="r" style="top:199px"><b class="al" style="left:0px;width:74px">Internation<s>...</s></b><b class="al" style="left:75px;width:305px">Rosen Inn International</b><b class="al" style="left:381px;width:39px">3 Stars</b><b class="al" style="left:421px;width:74px">Room Only</b><b class="al" style="left:496px;width:89px">Double 2&nbsp; Dou<s>...</s></b><b class="al" style="left:586px;width:34px">Sun</b><b class="al" style="left:621px;width:67px">18/03/2018</b><b class="al" style="left:689px;width:34px">Sun</b><b class="al" style="left:724px;width:67px">01/04/2018</b><b class="al" style="left:792px;width:61px">Hotelbeds</b><b class="ac" style="left:854px;width:24px"></b><b class="ac" style="left:879px;width:24px"></b><b class="ac" style="left:904px;width:24px"></b><b class="ar" style="left:929px;width:54px">1,234.78</b><b class="ar" style="left:984px;width:54px">308.70</b><b class="ar" style="left:1039px;width:64px">1,234.78</b><b class="ar" style="left:1104px;width:54px">0.00</b><b class="ac" style="left:1159px;width:24px"></b><b class="al" style="left:1184px;width:59px">XML</b><b class="al" style="left:1244px;width:74px"></b></div>
<div class="r" style="top:214px"><b class="al" style="left:0px;width:74px">Orlando Int<s>...</s></b><b class="al" style="left:75px;width:305px">Rosen Inn closest to Universal</b><b class="al" style="left:381px;width:39px">2.0</b><b class="al" style="left:421px;width:74px">Hot Breakfast</b><b class="al" style="left:496px;width:89px">Double Guest <s>...</s></b><b class="al" style="left:586px;width:34px">Sun</b><b class="al" style="left:621px;width:67px">18/03/2018</b><b class="al" style="left:689px;width:34px">Sun</b><b class="al" style="left:724px;width:67px">01/04/2018</b><b class="al" style="left:792px;width:61px">Get A Bed</b><b class="ac" style="left:854px;width:24px"></b><b class="ac" style="left:879px;width:24px"></b><b class="ac" style="left:904px;width:24px"></b><b class="ar" style="left:929px;width:54px">1,239.68</b><b class="ar" style="left:984px;width:54px">309.92</b><b class="ar" style="left:1039px;width:64px">1,239.68</b><b class="ar" style="left:1104px;width:54px">0.00</b><b class="ac" style="left:1159px;width:24px"></b><b class="al" style="left:1184px;width:59px">XML</b><b class="al" style="left:1244px;width:74px"></b></div>
<div class="r" style="top:229px"><b class="al" style="left:0px;width:74px">Orlando Int<s>...</s></b><b class="al" style="left:75px;width:305px">Rosen Inn International</b><b class="al" style="left:381px;width:39px">3.0</b><b class="al" style="left:421px;width:74px">Hot Breakfast</b><b class="al" style="left:496px;width:89px">Double Guest <s>...</s></b><b class="al" style="left:586px;width:34px">Sun</b><b class="al" style="left:621px;width:67px">18/03/2018</b><b class="al" style="left:689px;width:34px">Sun</b><b class="al" style="left:724px;width:67px">01/04/2018</b><b class="al" style="left:792px;width:61px">Get A Bed</b><b class="ac st" style="left:854px;width:24px">*</b><b class="ac" style="left:879px;width:24px"></b><b class="ac" style="left:904px;width:24px"></b><b class="ar" style="left:929px;width:54px">1,239.68</b><b class="ar" style="left:984px;width:54px">309.92</b><b class="ar" style="left:1039px;width:64px">1,239.68</b><b class="ar" style="left:1104px;width:54px">0.00</b><b class="ac" style="left:1159px;width:24px"></b><b class="al" style="left:1184px;width:59px">XML</b><b class="al" style="left:1244px;width:74px"></b></div>
<div class="r" style="top:244px"><b class="al" style="left:0px;width:74px">Orlando Int<s>...</s></b><b class="al" style="left:75px;width:305px">Rosen Inn at Pointe Orlando</b><b class="al" style="left:381px;width:39px">3.0</b><b class="al" style="left:421px;width:74px">Hot Breakfast</b><b class="al" style="left:496px;width:89px">Double Guest <s>...</s></b><b class="al" style="left:586px;width:34px">Sun</b><b class="al" style="left:621px;width:67px">18/03/2018</b><b class="al" style="left:689px;width:34px">Sun</b><b class="al" style="left:724px;width:67px">01/04/2018</b><b class="al" style="left:792px;width:61px">Get A Bed</b><b class="ac st" style="left:854px;width:24px">*</b><b class="ac" style="left:879px;width:24px"></b><b class="ac" style="left:904px;width:24px"></b><b class="ar" style="left:929px;width:54px">1,239.68</b><b class="ar" style="left:984px;width:54px">309.92</b><b class="ar" style="left:1039px;width:64px">1,239.68</b><b class="ar" style="left:1104px;width:54px">0.00</b><b class="ac" style="left:1159px;width:24px"></b><b class="al" style="left:1184px;width:59px">XML</b><b class="al" style="left:1244px;width:74px"></b></div>
<div class="r" style="top:259px"><b class="al" style="left:0px;width:74px">Orlando Int<s>...</s></b><b class="al" style="left:75px;width:305px">Rosen Inn International</b><b class="al" style="left:381px;width:39px">3.0</b><b class="al" style="left:421px;width:74px">Room Only</b><b class="al" style="left:496px;width:89px">Double 2&nbsp; Dou<s>...</s></b><b class="al" style="left:586px;width:34px">Sun</b><b class="al" style="left:621px;width:67px">18/03/2018</b><b class="al" style="left:689px;width:34px">Sun</b><b class="al" style="left:724px;width:67px">01/04/2018</b><b class="al" style="left:792px;width:61px">Get A Bed</b><b class="ac st" style="left:854px;width:24px">*</b><b class="ac" style="left:879px;width:24px"></b><b class="ac" style="left:904px;width:24px"></b><b class="ar" style="left:929px;width:54px">1,303.50</b><b class="ar" style="left:984px;width:54px">325.88</b><b class="ar" style="left:1039px;width:64px">1,303.50</b><b class="ar" style="left:1104px;width:54px">0.00</b><b class="ac" style="left:1159px;width:24px"></b><b class="al" style="left:1184px;width:59px">XML</b><b class="al" style="left:1244px;width:74px"></b></div>
<div class="r" style="top:274px"><b class="al" style="left:0px;width:74px">Orlando Int<s>...</s></b><b class="al" style="left:75px;width:305px">Rosen Inn at Pointe Orlando</b><b class="al" style="left:381px;width:39px">3.0</b><b class="al" style="left:421px;width:74px">Room Only</b><b class="al" style="left:496px;width:89px">Standard Roo<s>...</s></b><b class="al" style="left:586px;width:34px">Sun</b><b class="al" style="left:621px;width:67px">18/03/2018</b><b class="al" style="left:689px;width:34px">Sun</b><b class="al" style="left:724px;width:67px">01/04/2018</b><b class="al" style="left:792px;width:61px">Get A Bed</b><b class="ac st" style="left:854px;width:24px">*</b><b class="ac st" style="left:879px;width:24px">*</b><b class="ac" style="left:904px;width:24px"></b><b class="ar" style="left:929px;width:54px">1,628.14</b><b class="ar" style="left:984px;width:54px">407.04</b><b class="ar" style="left:1039px;width:64px">1,628.14</b><b class="ar" style="left:1104px;width:54px">0.00</b><b class="ac" style="left:1159px;width:24px"></b><b class="al" style="left:1184px;width:59px">XML</b><b class="al" style="left:1244px;width:74px"></b></div>
<div class="r" style="top:289px"><b class="al" style="left:0px;width:74px">Internation<s>...</s></b><b class="al" style="left:75px;width:305px">Rosen Shingle Creek</b><b class="al" style="left:381px;width:39px">4.0</b><b class="al" style="left:421px;width:74px">Room Only</b><b class="al" style="left:496px;width:89px">Standard Room</b><b class="al" style="left:586px;width:34px">Sun</b><b class="al" style="left:621px;width:67px">18/03/2018</b><b class="al" style="left:689px;width:34px">Sun</b><b class="al" style="left:724px;width:67px">01/04/2018</b><b class="al" style="left:792px;width:61px">Ocean B<s>...</s></b><b class="ac" style="left:854px;width:24px"></b><b class="ac" style="left:879px;width:24px"></b><b class="ac" style="left:904px;width:24px"></b><b class="ar" style="left:929px;width:54px">1,786.21</b><b class="ar" style="left:984px;width:54px">446.55</b><b class="ar" style="left:1039px;width:64px">1,786.21</b><b class="ar" style="left:1104px;width:54px">0.00</b><b class="ac" style="left:1159px;width:24px"></b><b class="al" style="left:1184px;width:59px">XML</b><b class="al" style="left:1244px;width:74px"></b></div>
<div class="r" style="top:304px"><b class="al" style="left:0px;width:74px">Internation<s>...</s></b><b class="al" style="left:75px;width:305px">Rosen Shingle Creek</b><b class="al" style="left:381px;width:39px">5 Stars</b><b class="al" style="left:421px;width:74px">Room Only</b><b class="al" style="left:496px;width:89px">Double Deluxe</b><b class="al" style="left:586px;width:34px">Sun</b><b class="al" style="left:621px;width:67px">18/03/2018</b><b class="al" style="left:689px;width:34px">Sun</b><b class="al" style="left:724px;width:67px">01/04/2018</b><b class="al" style="left:792px;width:61px">Hotelbeds</b><b class="ac" style="left:854px;width:24px"></b><b class="ac" style="left:879px;width:24px"></b><b class="ac" style="left:904px;width:24px"></b><b class="ar" style="left:929px;width:54px">1,824.32</b><b class="ar" style="left:984px;width:54px">456.08</b><b class="ar" style="left:1039px;width:64px">1,824.32</b><b class="ar" style="left:1104px;width:54px">0.00</b><b class="ac" style="left:1159px;width:24px"></b><b class="al" style="left:1184px;width:59px">XML</b><b class="al" style="left:1244px;width:74px"></b></div>
<div class="r" style="top:319px"><b class="al" style="left:0px;width:74px">Orlando (FL)</b><b class="al" style="left:75px;width:305px">Rosen Shingle Creek</b><b class="al" style="left:381px;width:39px">4.5s<s>...</s></b><b class="al" style="left:421px;width:74px">Room Only</b><b class="al" style="left:496px;width:89px">Run Of House <s>...</s></b><b class="al" style="left:586px;width:34px">Sun</b><b class="al" style="left:621px;width:67px">18/03/2018</b><b class="al" style="left:689px;width:34px">Sun</b><b class="al" style="left:724px;width:67px">01/04/2018</b><b class="al" style="left:792px;width:61px">Bonotel</b><b class="ac" style="left:854px;width:24px"></b><b class="ac" style="left:879px;width:24px"></b><b class="ac" style="left:904px;width:24px"></b><b class="ar" style="left:929px;width:54px">1,914.17</b><b class="ar" style="left:984px;width:54px">478.54</b><b class="ar" style="left:1039px;width:64px">1,914.17</b><b class="ar" style="left:1104px;width:54px">0.00</b><b class="ac" style="left:1159px;width:24px"></b><b class="al" style="left:1184px;width:59px">XML</b><b class="al" style="left:1244px;width:74px"></b></div>
<div class="r" style="top:334px"><b class="al" style="left:0px;width:74px">Orlando (FL)</b><b class="al" style="left:75px;width:305px">Rosen Shingle Creek</b><b class="al" style="left:381px;width:39px">4.5s<s>...</s></b><b class="al" style="left:421px;width:74px">Room Only</b><b class="al" style="left:496px;width:89px">Run Of House <s>...</s></b><b class="al" style="left:586px;width:34px">Sun</b><b class="al" style="left:621px;width:67px">18/03/2018</b><b class="al" style="left:689px;width:34px">Sun</b><b class="al" style="left:724px;width:67px">01/04/2018</b><b class="al" style="left:792px;width:61px">Bonotel</b><b class="ac" style="left:854px;width:24px"></b><b class="ac" style="left:879px;width:24px"></b><b class="ac" style="left:904px;width:24px"></b><b class="ar" style="left:929px;width:54px">1,914.17</b><b class="ar" style="left:984px;width:54px">478.54</b><b class="ar" style="left:1039px;width:64px">1,914.17</b><b class="ar" style="left:1104px;width:54px">0.00</b><b class="ac" style="left:1159px;width:24px"></b><b class="al" style="left:1184px;width:59px">XML</b><b class="al" style="left:1244px;width:74px"></b></div>
<div class="r" style="top:349px"><b class="al" style="left:0px;width:74px">Orlando (FL)</b><b class="al" style="left:75px;width:305px">Rosen Shingle Creek</b><b class="al" style="left:381px;width:39px">4.5s<s>...</s></b><b class="al" style="left:421px;width:74px">Room Only</b><b class="al" style="left:496px;width:89px">Run Of House <s>...</s></b><b class="al" style="left:586px;width:34px">Sun</b><b class="al" style="left:621px;width:67px">18/03/2018</b><b class="al" style="left:689px;width:34px">Sun</b><b class="al" style="left:724px;width:67px">01/04/2018</b><b class="al" style="left:792px;width:61px">Bonotel</b><b class="ac" style="left:854px;width:24px"></b><b class="ac" style="left:879px;width:24px"></b><b class="ac" style="left:904px;width:24px"></b><b class="ar" style="left:929px;width:54px">1,914.17</b><b class="ar" style="left:984px;width:54px">478.54</b><b class="ar" style="left:1039px;width:64px">1,914.17</b><b class="ar" style="left:1104px;width:54px">0.00</b><b class="ac" style="left:1159px;width:24px"></b><b class="al" style="left:1184px;width:59px">XML</b><b class="al" style="left:1244px;width:74px"></b></div>
<div class="r" style="top:364px"><b class="al" style="left:0px;width:74px">Orlando Int<s>...</s></b><b class="al" style="left:75px;width:305px">Rosen Shingle Creek</b><b class="al" style="left:381px;width:39px">4.0</b><b class="al" style="left:421px;width:74px">Room Only</b><b class="al" style="left:496px;width:89px">Double Deluxe</b><b class="al" style="left:586px;width:34px">Sun</b><b class="al" style="left:621px;width:67px">18/03/2018</b><b class="al" style="left:689px;width:34px">Sun</b><b class="al" style="left:724px;width:67px">01/04/2018</b><b class="al" style="left:792px;width:61px">Get A Bed</b><b class="ac" style="left:854px;width:24px"></b><b class="ac" style="left:879px;width:24px"></b><b class="ac" style="left:904px;width:24px"></b><b class="ar" style="left:929px;width:54px">1,926.19</b><b class="ar" style="left:984px;width:54px">481.55</b><b class="ar" style="left:1039px;width:64px">1,926.19</b><b class="ar" style="left:1104px;width:54px">0.00</b><b class="ac" style="left:1159px;width:24px"></b><b class="al" style="left:1184px;width:59px">XML</b><b class="al" style="left:1244px;width:74px"></b></div>
<div class="r" style="top:379px"><b class="al" style="left:0px;width:74px">Internation<s>...</s></b><b class="al" style="left:75px;width:305px">Rosen Shingle Creek</b><b class="al" style="left:381px;width:39px">4.0</b><b class="al" style="left:421px;width:74px">Room Only</b><b class="al" style="left:496px;width:89px">Standard Roo<s>...</s></b><b class="al" style="left:586px;width:34px">Sun</b><b class="al" style="left:621px;width:67px">18/03/2018</b><b class="al" style="left:689px;width:34px">Sun</b><b class="al" style="left:724px;width:67px">01/04/2018</b><b class="al" style="left:792px;width:61px">Ocean B<s>...</s></b><b class="ac" style="left:854px;width:24px"></b><b class="ac" style="left:879px;width:24px"></b><b class="ac" style="left:904px;width:24px"></b><b class="ar" style="left:929px;width:54px">2,172.41</b><b class="ar" style="left:984px;width:54px">543.10</b><b class="ar" style="left:1039px;width:64px">2,172.41</b><b class="ar" style="left:1104px;width:54px">0.00</b><b class="ac" style="left:1159px;width:24px"></b><b class="al" style="left:1184px;width:59px">XML</b><b class="al" style="left:1244px;width:74px"></b></div>
<div class="r" style="top:394px"><b class="al" style="left:0px;width:74px">Orlando (FL)</b><b class="al" style="left:75px;width:305px">Rosen Shingle Creek</b><b class="al" style="left:381px;width:39px">4.5s<s>...</s></b><b class="al" style="left:421px;width:74px">Breakfast B<s>...</s></b><b class="al" style="left:496px;width:89px">Run Of House <s>...</s></b><b class="al" style="left:586px;width:34px">Sun</b><b class="al" style="left:621px;width:67px">18/03/2018</b><b class="al" style="left:689px;width:34px">Sun</b><b class="al" style="left:724px;width:67px">01/04/2018</b><b class="al" style="left:792px;width:61px">Bonotel</b><b class="ac" style="left:854px;width:24px"></b><b class="ac" style="left:879px;width:24px"></b><b class="ac" style="left:904px;width:24px"></b><b class="ar" style="left:929px;width:54px">2,455.92</b><b class="ar" style="left:984px;width:54px">613.98</b><b class="ar" style="left:1039px;width:64px">2,455.92</b><b class="ar" style="left:1104px;width:54px">0.00</b><b class="ac" style="left:1159px;width:24px"></b><b class="al" style="left:1184px;width:59px">XML</b><b class="al" style="left:1244px;width:74px"></b></div>
<div class="r" style="top:409px"><b class="al" style="left:0px;width:74px">Internation<s>...</s></b><b class="al" style="left:75px;width:305px">Rosen Shingle Creek</b><b class="al" style="left:381px;width:39px">5 Stars</b><b class="al" style="left:421px;width:74px">Bed And Br<s>...</s></b><b class="al" style="left:496px;width:89px">Double Deluxe</b><b class="al" style="left:586px;width:34px">Sun</b><b class="al" style="left:621px;width:67px">18/03/2018</b><b class="al" style="left:689px;width:34px">Sun</b><b class="al" style="left:724px;width:67px">01/04/2018</b><b class="al" style="left:792px;width:61px">Hotelbeds</b><b class="ac" style="left:854px;width:24px"></b><b class="ac" style="left:879px;width:24px"></b><b class="ac" style="left:904px;width:24px"></b><b class="ar" style="left:929px;width:54px">2,560.33</b><b class="ar" style="left:984px;width:54px">640.08</b><b class="ar" style="left:1039px;width:64px">2,560.33</b><b class="ar" style="left:1104px;width:54px">0.00</b><b class="ac" style="left:1159px;width:24px"></b><b class="al" style="left:1184px;width:59px">XML</b><b class="al" style="left:1244px;width:74px"></b></div>
<div class="r" style="top:424px"><b class="al" style="left:0px;width:74px">Orlando (FL)</b><b class="al" style="left:75px;width:305px">Rosen Shingle Creek</b><b class="al" style="left:381px;width:39px">4.5s<s>...</s></b><b class="al" style="left:421px;width:74px">Breakfast B<s>...</s></b><b class="al" style="left:496px;width:89px">Run Of House <s>...</s></b><b class="al" style="left:586px;width:34px">Sun</b><b class="al" style="left:621px;width:67px">18/03/2018</b><b class="al" style="left:689px;width:34px">Sun</b><b class="al" style="left:724px;width:67px">01/04/2018</b><b class="al" style="left:792px;width:61px">Bonotel</b><b class="ac" style="left:854px;width:24px"></b><b class="ac" style="left:879px;width:24px"></b><b class="ac" style="left:904px;width:24px"></b><b class="ar" style="left:929px;width:54px">2,648.53</b><b class="ar" style="left:984px;width:54px">662.13</b><b class="ar" style="left:1039px;width:64px">2,648.53</b><b class="ar" style="left:1104px;width:54px">0.00</b><b class="ac" style="left:1159px;width:24px"></b><b class="al" style="left:1184px;width:59px">XML</b><b class="al" style="left:1244px;width:74px"></b></div>
<div class="r" style="top:439px"><b class="al" style="left:0px;width:74px">Orlando Int<s>...</s></b><b class="al" style="left:75px;width:305px">Rosen Shingle Creek</b><b class="al" style="left:381px;width:39px">4.0</b><b class="al" style="left:421px;width:74px">Bed &amp; Brea<s>...</s></b><b class="al" style="left:496px;width:89px">Double Deluxe</b><b class="al" style="left:586px;width:34px">Sun</b><b class="al" style="left:621px;width:67px">18/03/2018</b><b class="al" style="left:689px;width:34px">Sun</b><b class="al" style="left:724px;width:67px">01/04/2018</b><b class="al" style="left:792px;width:61px">Get A Bed</b><b class="ac" style="left:854px;width:24px"></b><b class="ac" style="left:879px;width:24px"></b><b class="ac" style="left:904px;width:24px"></b><b class="ar" style="left:929px;width:54px">2,702.88</b><b class="ar" style="left:984px;width:54px">675.72</b><b class="ar" style="left:1039px;width:64px">2,702.88</b><b class="ar" style="left:1104px;width:54px">0.00</b><b class="ac" style="left:1159px;width:24px"></b><b class="al" style="left:1184px;width:59px">XML</b><b class="al" style="left:1244px;width:74px"></b></div>
<div class="r" style="top:454px"><b class="al" style="left:0px;width:74px">Internation<s>...</s></b><b class="al" style="left:75px;width:305px">Rosen Plaza Resort</b><b class="al" style="left:381px;width:39px">4 Stars</b><b class="al" style="left:421px;width:74px">Room Only</b><b class="al" style="left:496px;width:89px">Double Deluxe</b><b class="al" style="left:586px;width:34px">Sun</b><b class="al" style="left:621px;width:67px">18/03/2018</b><b class="al" style="left:689px;width:34px">Sun</b><b class="al" style="left:724px;width:67px">01/04/2018</b><b class="al" style="left:792px;width:61px">Hotelbeds</b><b class="ac" style="left:854px;width:24px"></b><b class="ac" style="left:879px;width:24px"></b><b class="ac" style="left:904px;width:24px"></b><b class="ar" style="left:929px;width:54px">3,442.85</b><b class="ar" style="left:984px;width:54px">860.71</b><b class="ar" style="left:1039px;width:64px">3,442.85</b><b class="ar" style="left:1104px;width:54px">0.00</b><b class="ac" style="left:1159px;width:24px"></b><b class="al" style="left:1184px;width:59px">XML</b><b class="al" style="left:1244px;width:74px"></b></div>
<div class="r" style="top:469px"><b class="al" style="left:0px;width:74px">Internation<s>...</s></b><b class="al" style="left:75px;width:305px">Rosen Centre Resort</b><b class="al" style="left:381px;width:39px">4 Stars</b><b class="al" style="left:421px;width:74px">Room Only</b><b class="al" style="left:496px;width:89px">Double Deluxe</b><b class="al" style="left:586px;width:34px">Sun</b><b class="al" style="left:621px;width:67px">18/03/2018</b><b class="al" style="left:689px;width:34px">Sun</b><b class="al" style="left:724px;width:67px">01/04/2018</b><b class="al" style="left:792px;width:61px">Hotelbeds</b><b class="ac" style="left:854px;width:24px"></b><b class="ac" style="left:879px;width:24px"></b><b class="ac" style="left:904px;width:24px"></b><b class="ar" style="left:929px;width:54px">3,442.85</b><b class="ar" style="left:984px;width:54px">860.71</b><b class="ar" style="left:1039px;width:64px">3,442.85</b><b class="ar" style="left:1104px;width:54px">0.00</b><b class="ac" style="left:1159px;width:24px"></b><b class="al" style="left:1184px;width:59px">XML</b><b class="al" style="left:1244px;width:74px"></b></div>
<div class="r" style="top:484px"><b class="al" style="left:0px;width:74px">Orlando Int<s>...</s></b><b class="al" style="left:75px;width:305px">Rosen Plaza Hotel</b><b class="al" style="left:381px;width:39px">3.0</b><b class="al" style="left:421px;width:74px">Room Only</b><b class="al" style="left:496px;width:89px">Double Deluxe</b><b class="al" style="left:586px;width:34px">Sun</b><b class="al" style="left:621px;width:67px">18/03/2018</b><b class="al" style="left:689px;width:34px">Sun</b><b class="al" style="left:724px;width:67px">01/04/2018</b><b class="al" style="left:792px;width:61px">Get A Bed</b><b class="ac" style="left:854px;width:24px"></b><b class="ac" style="left:879px;width:24px"></b><b class="ac" style="left:904px;width:24px"></b><b class="ar" style="left:929px;width:54px">3,634.52</b><b class="ar" style="left:984px;width:54px">908.63</b><b class="ar" style="left:1039px;width:64px">3,634.52</b><b class="ar" style="left:1104px;width:54px">0.00</b><b class="ac" style="left:1159px;width:24px"></b><b class="al" style="left:1184px;width:59px">XML</b><b class="al" style="left:1244px;width:74px"></b></div>
<div class="r" style="top:499px"><b class="al" style="left:0px;width:74px">Orlando Int<s>...</s></b><b class="al" style="left:75px;width:305px">Rosen Centre Hotel</b><b class="al" style="left:381px;width:39px">3.0</b><b class="al" style="left:421px;width:74px">Room Only</b><b class="al" style="left:496px;width:89px">Double Deluxe</b><b class="al" style="left:586px;width:34px">Sun</b><b class="al" style="left:621px;width:67px">18/03/2018</b><b class="al" style="left:689px;width:34px">Sun</b><b class="al" style="left:724px;width:67px">01/04/2018</b><b class="al" style="left:792px;width:61px">Get A Bed</b><b class="ac" style="left:854px;width:24px"></b><b class="ac" style="left:879px;width:24px"></b><b class="ac" style="left:904px;width:24px"></b><b class="ar" style="left:929px;width:54px">3,634.52</b><b class="ar" style="left:984px;width:54px">908.63</b><b class="ar" style="left:1039px;width:64px">3,634.52</b><b class="ar" style="left:1104px;width:54px">0.00</b><b class="ac" style="left:1159px;width:24px"></b><b class="al" style="left:1184px;width:59px">XML</b><b class="al" style="left:1244px;width:74px"></b></div>
<div class="r" style="top:514px"><b class="al" style="left:0px;width:74px">Internation<s>...</s></b><b class="al" style="left:75px;width:305px">Rosen Shingle Creek</b><b class="al" style="left:381px;width:39px">5 Stars</b><b class="al" style="left:421px;width:74px">Room Only</b><b class="al" style="left:496px;width:89px">Double 2 Quee<s>...</s></b><b class="al" style="left:586px;width:34px">Sun</b><b class="al" style="left:621px;width:67px">18/03/2018</b><b class="al" style="left:689px;width:34px">Sun</b><b class="al" style="left:724px;width:67px">01/04/2018</b><b class="al" style="left:792px;width:61px">Hotelbeds</b><b class="ac" style="left:854px;width:24px"></b><b class="ac" style="left:879px;width:24px"></b><b class="ac" style="left:904px;width:24px"></b><b class="ar" style="left:929px;width:54px">4,549.90</b><b class="ar" style="left:984px;width:54px">1,137.48</b><b class="ar" style="left:1039px;width:64px">4,549.90</b><b class="ar" style="left:1104px;width:54px">0.00</b><b class="ac" style="left:1159px;width:24px"></b><b class="al" style="left:1184px;width:59px">XML</b><b class="al" style="left:1244px;width:74px"></b></div>
<div class="r" style="top:529px"><b class="al" style="left:0px;width:74px">Orlando Int<s>...</s></b><b class="al" style="left:75px;width:305px">Rosen Shingle Creek</b><b class="al" style="left:381px;width:39px">4.0</b><b class="al" style="left:421px;width:74px">Room Only</b><b class="al" style="left:496px;width:89px">Double 2 Quee<s>...</s></b><b class="al" style="left:586px;width:34px">Sun</b><b class="al" style="left:621px;width:67px">18/03/2018</b><b class="al" style="left:689px;width:34px">Sun</b><b class="al" style="left:724px;width:67px">01/04/2018</b><b class="al" style="left:792px;width:61px">Get A Bed</b><b class="ac" style="left:854px;width:24px"></b><b class="ac" style="left:879px;width:24px"></b><b class="ac" style="left:904px;width:24px"></b><b class="ar" style="left:929px;width:54px">4,803.11</b><b class="ar" style="left:984px;width:54px">1,200.78</b><b class="ar" style="left:1039px;width:64px">4,803.11</b><b class="ar" style="left:1104px;width:54px">0.00</b><b class="ac" style="left:1159px;width:24px"></b><b class="al" style="left:1184px;width:59px">XML</b><b class="al" style="left:1244px;width:74px"></b></div>
</div>
<span id="fp" class="a">First portion: 6.8 sec, total search time: 20.9 sec</span>
<div class="a" style="left:215px;top:805px;width:1346px;height:1px;background:#808080"></div><div class="a" style="left:1560px;top:778px;width:1px;height:22px;background:#fff;border-bottom:1px solid #404040"></div>
<div class="bt" style="left:215px;width:53px;background:#D4D0C8;color:#000">Summary</div><div class="bt" style="left:268px;width:41px;background:#D4D0C8;color:#000">Search</div><div class="bt" style="left:309px;width:67px;background:#CCFFC0;color:#000">Acc 2A MCO</div><div class="bt" style="left:376px;width:51px;background:#CCFFC0;color:#000">Car MCO</div><div class="bt" style="left:427px;width:128px;background:#C0C0FF;color:#000">Acc 2A Cocoa Beach (FL)</div><div class="bt" style="left:555px;width:112px;background:#CCFFC0;color:#000">Flt 2A MAN MCO MAN</div><div class="bt" style="left:667px;width:129px;background:#C0C0FF;color:#000">Flt 2A,2C MAN MCO MAN</div><div class="bt" style="left:796px;width:83px;background:#000080;color:#fff;border-color:#000080">Acc 2A,2C MCO</div><div class="bt" style="left:879px;width:196px;background:#CCFFC0;color:#000">Trf 2A,2C MCO International Drive (FL)</div><div class="bt" style="left:1075px;width:96px;background:#D4D0C8;color:#000">Financial Summary</div>
<div id="bb" class="a"></div><div id="bb2" class="a"></div>
<span id="status" class="a">User: 415 - Hema Yoganathan</span><span class="a" style="left:916px;top:832px">Retailer: 'Ocean-Florida'</span><span class="a" style="left:1043px;top:832px">Client: none</span>
<span id="clk" class="a">19:45</span>

<!-- taskbar -->
<div id="tbar" class="a"></div>
<div id="start" class="a"><svg class="a" style="left:1px;top:9px" width="17" height="17" viewBox="0 0 16 16"><path d="M1.500 3.500C4 2 6 2.300 7.600 3.600L6.400 8.600C5 7.400 3 7.200.5 8.600Z" fill="#e8401c"/><path d="M8.600 4.200c2 1.300 4 1.300 6.400-.2l-1.200 5c-2.200 1.400-4.300 1.400-6.300.2z" fill="#58b820"/><path d="M.2 9.800c2.600-1.500 4.500-1.200 6-.1l-1.200 5c-1.600-1.200-3.500-1.400-6 0z" fill="#2878e0"/><path d="M7.200 10.400c2 1.300 4.200 1.300 6.400-.2l-1.200 5c-2.200 1.400-4.200 1.400-6.300.2z" fill="#f8c010"/></svg><span class="a t">Start</span></div>
<div id="task" class="a"><svg class="a" style="left:5px;top:7px" width="29" height="21" viewBox="0 0 29 21"><defs><radialGradient id="tg" cx=".35" cy=".25" r=".8"><stop offset="0" stop-color="#fff070"/><stop offset=".4" stop-color="#f8b028"/><stop offset=".8" stop-color="#d86010"/><stop offset="1" stop-color="#a83c0c"/></radialGradient></defs><path d="M1 6C2 2 6 .500 10 1c3 .300 5 2 7 3.500 3-1.500 7-1 11 .500-1 3-4 6-7 9-2 2-4 4-7 6-2-2-5-4-8-7C4 10.500 2 8.500 1 6Z" fill="url(#tg)"/></svg><span class="a t">Interactive - Ocea...</span></div>
<div id="tray" class="a"><svg class="a" style="left:6px;top:11px" width="16" height="16" viewBox="0 0 16 16"><path d="M0 3.500h10.500v6.500H0z" fill="#48c030" stroke="#208818" stroke-width=".8"/><path d="M1 4.500 8 8.500" stroke="#a8f088" stroke-width="1.400"/><rect x="8.500" y="4.500" width="2" height="2" fill="#103010"/><path d="M3 10v2M5 10v2M7 10v2" stroke="#e8d020" stroke-width="1.200"/><path d="M12 2v10M12 2.500h3M12 5.500h2.500M12 8.500h2.500" stroke="#000" stroke-width="1.100" fill="none"/></svg><svg class="a" style="left:30px;top:11px" width="16" height="16" viewBox="0 0 16 16"><rect x="5.500" y="3.500" width="9.500" height="9" fill="#c4c4c4" stroke="#fff" stroke-width="1.200"/><rect x="6.500" y="4.500" width="7.500" height="7" fill="#a8a8a8"/><path d="M5 14.500h10" stroke="#fff" stroke-width="1.600"/><path d="M1 1v5h4V1M3 6v9" stroke="#fff" stroke-width="2.400" fill="none"/><path d="M1 1v5h4V1M3 6v9" stroke="#505050" stroke-width="1" fill="none"/><path d="M5.500 12.500V4" stroke="#707070" stroke-width=".8"/></svg><svg class="a" style="left:54px;top:11px" width="16" height="16" viewBox="0 0 16 16"><path d="M.500 5.500h2.500l4.500-4.500v14L3 10.500H.500z" fill="#e8e8e8" stroke="#909090" stroke-width=".9"/><path d="M7.500 1v14" stroke="#b0b0b0" stroke-width="1"/><circle cx="11.500" cy="11" r="4.300" fill="#e82020"/><path d="M9.500 9l4 4M13.500 9l-4 4" stroke="#fff" stroke-width="1.700"/></svg>
  <span class="a" style="left:80px;top:5px;width:46px;text-align:right;letter-spacing:.4px">19:45</span>
  <span class="a" style="left:83px;top:21px;letter-spacing:.3px">27/03/2018</span>
</div>
</body>
</html>
